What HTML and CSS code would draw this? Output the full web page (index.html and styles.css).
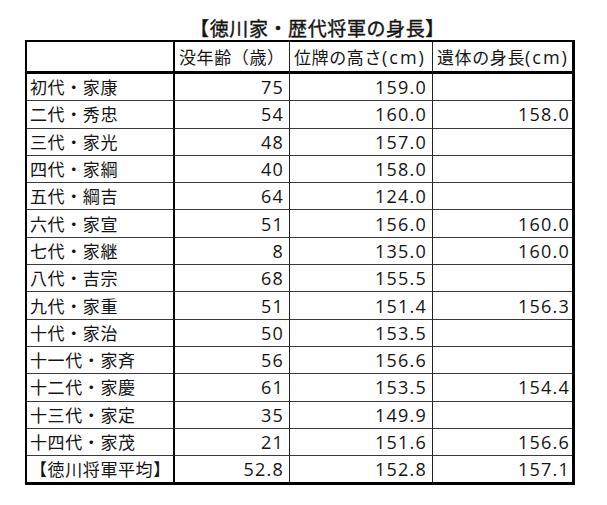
FILE: index.html
```html
<!DOCTYPE html>
<html lang="ja">
<head>
<meta charset="utf-8">
<title>徳川家・歴代将軍の身長</title>
<link rel="stylesheet" href="styles.css">
</head>
<body>
<div class="title">【徳川家・歴代将軍の身長】</div>
<table class="tbl">
  <colgroup><col class="c1"><col class="c2"><col class="c3"><col class="c4"></colgroup>
  <thead>
    <tr><th class="name"></th><th>没年齢（歳）</th><th>位牌の高さ<span class="lat">(cm)</span></th><th class="last">遺体の身長<span class="lat">(cm)</span></th></tr>
  </thead>
  <tbody>
    <tr><td class="name">初代・家康</td><td class="num">75</td><td class="num">159.0</td><td class="num last"></td></tr>
    <tr><td class="name">二代・秀忠</td><td class="num">54</td><td class="num">160.0</td><td class="num last">158.0</td></tr>
    <tr><td class="name">三代・家光</td><td class="num">48</td><td class="num">157.0</td><td class="num last"></td></tr>
    <tr><td class="name">四代・家綱</td><td class="num">40</td><td class="num">158.0</td><td class="num last"></td></tr>
    <tr><td class="name">五代・綱吉</td><td class="num">64</td><td class="num">124.0</td><td class="num last"></td></tr>
    <tr><td class="name">六代・家宣</td><td class="num">51</td><td class="num">156.0</td><td class="num last">160.0</td></tr>
    <tr><td class="name">七代・家継</td><td class="num">8</td><td class="num">135.0</td><td class="num last">160.0</td></tr>
    <tr><td class="name">八代・吉宗</td><td class="num">68</td><td class="num">155.5</td><td class="num last"></td></tr>
    <tr><td class="name">九代・家重</td><td class="num">51</td><td class="num">151.4</td><td class="num last">156.3</td></tr>
    <tr><td class="name">十代・家治</td><td class="num">50</td><td class="num">153.5</td><td class="num last"></td></tr>
    <tr><td class="name">十一代・家斉</td><td class="num">56</td><td class="num">156.6</td><td class="num last"></td></tr>
    <tr><td class="name">十二代・家慶</td><td class="num">61</td><td class="num">153.5</td><td class="num last">154.4</td></tr>
    <tr><td class="name">十三代・家定</td><td class="num">35</td><td class="num">149.9</td><td class="num last"></td></tr>
    <tr><td class="name">十四代・家茂</td><td class="num">21</td><td class="num">151.6</td><td class="num last">156.6</td></tr>
    <tr class="avg"><td class="name">【徳川将軍平均】</td><td class="num">52.8</td><td class="num">152.8</td><td class="num last">157.1</td></tr>
  </tbody>
</table>
</body>
</html>
```
FILE: styles.css
```css
html, body {
  margin: 0;
  padding: 0;
  background: #fff;
}
body {
  font-family: "Noto Sans CJK JP", "Noto Sans", sans-serif;
  color: #141414;
  font-size: 17px;
}
.title {
  box-sizing: border-box;
  height: 40px;
  padding-top: 18px;
  padding-left: 28px;
  text-align: center;
  font-size: 19px;
  line-height: 19px;
  letter-spacing: 0.6px;
  font-weight: 400;
  -webkit-text-stroke: 0.4px #141414;
  white-space: nowrap;
}
.tbl {
  margin-left: 25px;
  width: 550px;
  table-layout: fixed;
  border-collapse: separate;
  border-spacing: 0;
  border-style: solid;
  border-color: #000;
  border-width: 2px 3px 3px 2px;
}
.c1 { width: 148px; }
.c2 { width: 115px; }
.c3 { width: 143px; }
.c4 { width: 139px; }
th, td {
  padding: 0 5px 0 3px;
  border-right: 1px solid #222;
  border-bottom: 1px solid #3a3a3a;
  white-space: nowrap;
  overflow: hidden;
  letter-spacing: 0.6px;
  line-height: 20px;
}
th {
  height: 29px;
  font-weight: 400;
  text-align: left;
  border-bottom: 3px solid #000;
  padding-left: 4px;
  padding-top: 0;
}
th.name, td.name {
  border-right: 2px solid #000;
}
th.last, td.last {
  border-right: none;
}
tbody tr {
  height: 27.3px;
}
tbody tr.avg {
  height: 26px;
}
tbody tr.avg td {
  border-bottom: none;
}
.num {
  font-family: "Open Sans", "Noto Sans CJK JP", sans-serif;
  font-size: 18px;
  letter-spacing: 1.2px;
  text-align: right;
}
td.num.last {
  padding-right: 2px;
}
.lat {
  font-family: "Open Sans", "Noto Sans CJK JP", sans-serif;
  font-size: 18px;
  letter-spacing: 2px;
}
```
